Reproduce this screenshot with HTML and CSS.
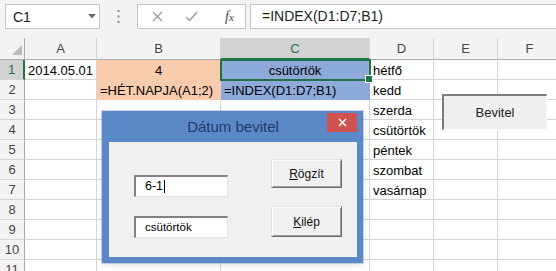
FILE: index.html
```html
<!DOCTYPE html>
<html>
<head>
	<meta charset="utf-8">
	<link rel="stylesheet" href="styles.css">
</head>
<body>
<div class="app">

	<div class="fbar">
		<div class="namebox">
			<span>C1</span>
			<svg width="8" height="5" viewBox="0 0 8 5"><polygon points="0,0 8,0 4,4.5" fill="#6a6a6a"/></svg>
		</div>
		<div class="dots">
			<svg width="3" height="13" viewBox="0 0 3 13"><rect x="0.5" y="0" width="2" height="2" fill="#8a8a8a"/><rect x="0.5" y="5.5" width="2" height="2" fill="#8a8a8a"/><rect x="0.5" y="11" width="2" height="2" fill="#8a8a8a"/></svg>
		</div>
		<div class="fbtns">
			<svg class="ic-x" width="11" height="11" viewBox="0 0 11 11"><path d="M1 1 L10 10 M10 1 L1 10" stroke="#9a9a9a" stroke-width="1.3" fill="none"/></svg>
			<svg class="ic-ok" width="13" height="11" viewBox="0 0 13 11"><path d="M1 6 L4.5 9.5 L12 1" stroke="#9a9a9a" stroke-width="1.4" fill="none"/></svg>
			<span class="fx"><i>f</i><i class="fx-x">x</i></span>
		</div>
		<div class="finput">=INDEX(D1:D7;B1)</div>
	</div>

	<div class="sheet">
		<div class="hd corner">
			<svg width="25" height="22" viewBox="0 0 25 22"><polygon points="22,7 22,17 12,17" fill="#b9b9b9"/></svg>
		</div>
		<div class="hd">A</div>
		<div class="hd">B</div>
		<div class="hd hd-sel">C</div>
		<div class="hd">D</div>
		<div class="hd">E</div>
		<div class="hd">F</div>

		<div class="rh rh-sel">1</div>
		<div class="c right">2014.05.01</div>
		<div class="c peach mid">4</div>
		<div class="c blue mid active">csütörtök</div>
		<div class="c">hétfő</div>
		<div class="c"></div>
		<div class="c"></div>

		<div class="rh">2</div>
		<div class="c"></div>
		<div class="c peach">=HÉT.NAPJA(A1;2)</div>
		<div class="c blue">=INDEX(D1:D7;B1)</div>
		<div class="c">kedd</div>
		<div class="c"></div>
		<div class="c"></div>

		<div class="rh">3</div>
		<div class="c"></div>
		<div class="c"></div>
		<div class="c"></div>
		<div class="c">szerda</div>
		<div class="c"></div>
		<div class="c"></div>

		<div class="rh">4</div>
		<div class="c"></div>
		<div class="c"></div>
		<div class="c"></div>
		<div class="c">csütörtök</div>
		<div class="c"></div>
		<div class="c"></div>

		<div class="rh">5</div>
		<div class="c"></div>
		<div class="c"></div>
		<div class="c"></div>
		<div class="c">péntek</div>
		<div class="c"></div>
		<div class="c"></div>

		<div class="rh">6</div>
		<div class="c"></div>
		<div class="c"></div>
		<div class="c"></div>
		<div class="c">szombat</div>
		<div class="c"></div>
		<div class="c"></div>

		<div class="rh">7</div>
		<div class="c"></div>
		<div class="c"></div>
		<div class="c"></div>
		<div class="c">vasárnap</div>
		<div class="c"></div>
		<div class="c"></div>

		<div class="rh">8</div>
		<div class="c"></div>
		<div class="c"></div>
		<div class="c"></div>
		<div class="c"></div>
		<div class="c"></div>
		<div class="c"></div>

		<div class="rh">9</div>
		<div class="c"></div>
		<div class="c"></div>
		<div class="c"></div>
		<div class="c"></div>
		<div class="c"></div>
		<div class="c"></div>

		<div class="rh">10</div>
		<div class="c"></div>
		<div class="c"></div>
		<div class="c"></div>
		<div class="c"></div>
		<div class="c"></div>
		<div class="c"></div>

		<div class="rh">11</div>
		<div class="c"></div>
		<div class="c"></div>
		<div class="c"></div>
		<div class="c"></div>
		<div class="c"></div>
		<div class="c"></div>
	</div>

	<button class="sheet-btn">Bevitel</button>

	<div class="dialog">
		<div class="dtitle">
			Dátum bevitel
			<div class="dclose">
				<svg width="9" height="9" viewBox="0 0 9 9"><path d="M1 1 L8 8 M8 1 L1 8" stroke="#fff" stroke-width="1.5" fill="none"/></svg>
			</div>
		</div>
		<div class="dpanel">
			<div class="dcol-left">
				<div class="tbox">6-1<span class="caretline"></span></div>
				<div class="tbox small">csütörtök</div>
			</div>
			<div class="dcol-right">
				<div class="dbtn"><u>R</u>ögzít</div>
				<div class="dbtn tall"><u>K</u>ilép</div>
			</div>
		</div>
	</div>

</div>
</body>
</html>
```

FILE: styles.css
```css
* {
	margin: 0;
	padding: 0;
	box-sizing: border-box;
}
body {
	width: 556px;
	height: 271px;
	overflow: hidden;
	background: #fff;
	font-family: "Liberation Sans", Arial, sans-serif;
	color: #000;
}
.app {
	position: relative;
	width: 556px;
	height: 271px;
	overflow: hidden;
}

/* formula bar */
.fbar {
	height: 38px;
	background: #f3f3f3;
	display: flex;
	align-items: flex-start;
	padding: 4px 0 0 5px;
}
.namebox {
	width: 95px;
	height: 25px;
	background: #fff;
	border: 1px solid #c6c6c6;
	display: flex;
	align-items: center;
	justify-content: space-between;
	padding: 0 3px 0 7px;
	font-size: 14px;
	color: #222;
}
.dots {
	width: 37px;
	height: 25px;
	display: flex;
	align-items: center;
	justify-content: center;
}
.fbtns {
	width: 109px;
	height: 25px;
	background: #fff;
	border: 1px solid #c6c6c6;
	display: flex;
	align-items: center;
}
.ic-x {
	margin-left: 14px;
}
.ic-ok {
	margin-left: 22px;
}
.fx {
	margin-left: 27px;
	font-family: "Liberation Serif", serif;
	font-size: 14px;
	color: #444;
}
.fx-x {
	font-size: 11px;
}
.finput {
	flex: 1;
	margin-left: 4px;
	height: 25px;
	background: #fff;
	border: 1px solid #c6c6c6;
	border-right: none;
	font-size: 14px;
	line-height: 23px;
	padding-left: 11px;
	color: #222;
}

/* sheet grid */
.sheet {
	display: grid;
	grid-template-columns: 25px 72px 124px 149px 64px 64px 64px;
	grid-template-rows: 22px repeat(11, 20px);
}
.hd {
	background: #f3f3f3;
	border-right: 1px solid #d4d4d4;
	border-bottom: 1px solid #ababab;
	font-size: 13px;
	line-height: 21px;
	text-align: center;
	color: #444;
}
.corner {
	border-right-color: #ababab;
}
.hd-sel {
	background: #d2d2d2;
	color: #217346;
	border-bottom: 2px solid #217346;
}
.rh {
	background: #f3f3f3;
	border-right: 1px solid #ababab;
	border-bottom: 1px solid #d4d4d4;
	font-size: 13px;
	line-height: 19px;
	text-align: center;
	color: #444;
}
.rh-sel {
	background: #d2d2d2;
	color: #217346;
	border-right: 2px solid #217346;
}
.c {
	border-right: 1px solid #d4d4d4;
	border-bottom: 1px solid #d4d4d4;
	font-size: 13px;
	line-height: 17px;
	padding: 2px 3px 0;
	white-space: nowrap;
}
.right {
	text-align: right;
}
.mid {
	text-align: center;
}
.peach {
	background: #f8cbad;
	border-color: #f8cbad;
}
.blue {
	background: #8eaadb;
	border-color: #8eaadb;
}
.active {
	position: relative;
	z-index: 1;
	outline: 2px solid #217346;
	outline-offset: -1px;
}
.active::after {
	content: "";
	position: absolute;
	right: -4px;
	bottom: -4px;
	width: 6px;
	height: 6px;
	background: #217346;
	border: 1px solid #fff;
}

/* ActiveX button on the sheet */
.sheet-btn {
	position: absolute;
	left: 442px;
	top: 94px;
	width: 105px;
	height: 36px;
	background: #efefef;
	border-top: 2px solid #7d7d7d;
	border-left: 2px solid #7d7d7d;
	border-right: 1px solid #f9f9f9;
	border-bottom: 1px solid #f9f9f9;
	font-family: "Liberation Sans", Arial, sans-serif;
	font-size: 13px;
	color: #222;
}

/* userform */
.dialog {
	position: absolute;
	left: 102px;
	top: 111px;
	width: 261px;
	height: 152px;
	background: #5b89c8;
	padding: 0 6px 6px 7px;
	display: flex;
	flex-direction: column;
	box-shadow: 0 0 0 1px rgba(91, 137, 200, 0.3), 0 2px 6px rgba(0, 0, 0, 0.12);
}
.dtitle {
	position: relative;
	height: 31px;
	display: flex;
	align-items: center;
	justify-content: center;
	font-size: 15px;
	color: #1f3a6b;
}
.dclose {
	position: absolute;
	right: 0;
	top: 2px;
	width: 30px;
	height: 19px;
	background: #d0524e;
	display: flex;
	align-items: center;
	justify-content: center;
}
.dpanel {
	flex: 1;
	background: #f0f0f0;
	display: flex;
}
.dcol-left {
	width: 94px;
	margin-left: 25px;
	padding-top: 33px;
	display: flex;
	flex-direction: column;
	gap: 19px;
}
.tbox {
	height: 22px;
	background: #fff;
	border-top: 2px solid #828282;
	border-left: 2px solid #828282;
	border-right: 1px solid #e3e3e3;
	border-bottom: 1px solid #e3e3e3;
	padding-left: 9px;
	font-size: 12.5px;
	line-height: 19px;
	display: flex;
	align-items: center;
}
.tbox.small {
	font-size: 11.5px;
}
.caretline {
	display: inline-block;
	width: 1px;
	height: 13px;
	background: #000;
	margin-left: 1px;
}
.dcol-right {
	width: 71px;
	margin-left: 43px;
	padding-top: 17px;
	display: flex;
	flex-direction: column;
	gap: 18px;
}
.dbtn {
	height: 29px;
	background: #f0f0f0;
	border: 1px solid;
	border-color: #e3e3e3 #696969 #696969 #e3e3e3;
	box-shadow: inset 1px 1px 0 #fff, inset -1px -1px 0 #a0a0a0;
	display: flex;
	align-items: center;
	justify-content: center;
	font-size: 12px;
	color: #111;
}
.dbtn.tall {
	height: 31px;
}
```
